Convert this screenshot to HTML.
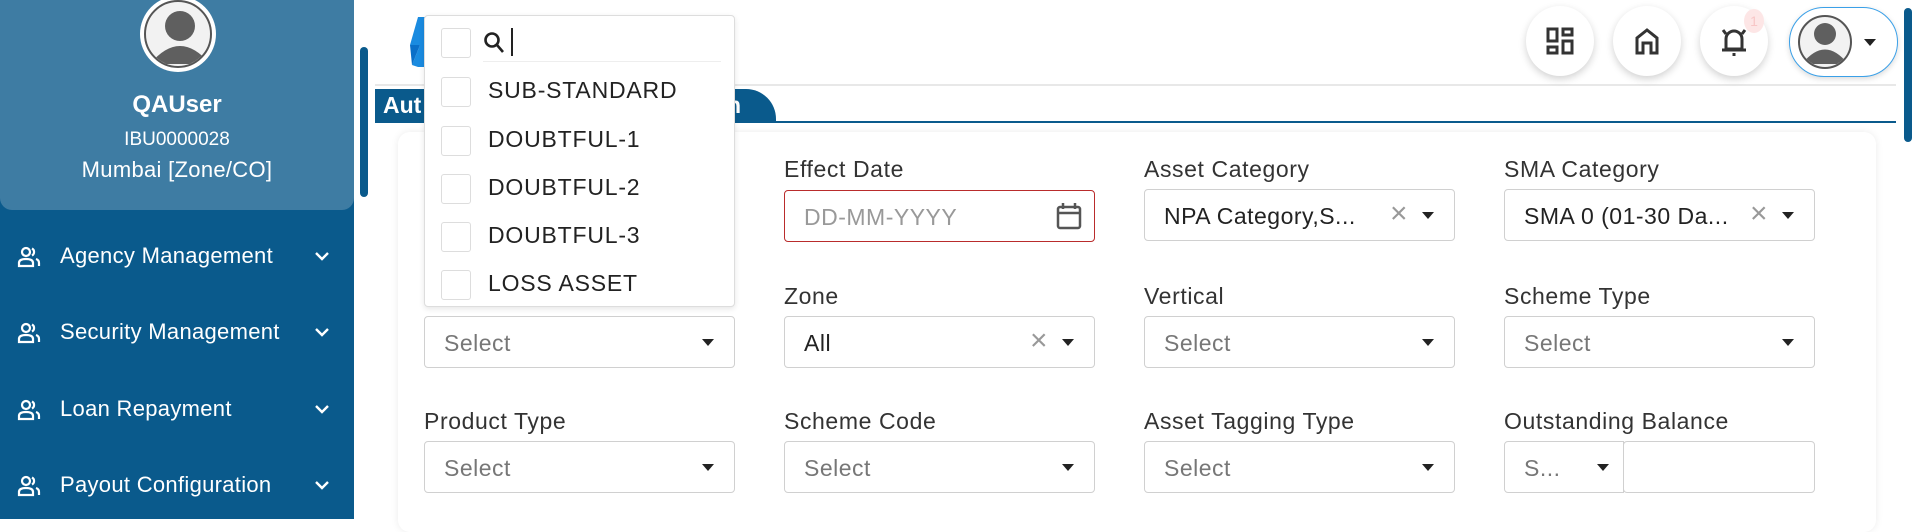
<!DOCTYPE html>
<html><head><meta charset="utf-8"><style>
*{box-sizing:border-box;margin:0;padding:0}
body{width:1920px;height:519px;overflow:hidden;background:#fff;font-family:"Liberation Sans",sans-serif;position:relative;color:#222}
.sb{position:absolute;left:0;top:0;width:354px;height:519px;background:#0a5a8c}
.card0{position:absolute;left:0;top:0;width:354px;height:210px;background:#3e7ca3;border-radius:0 0 12px 12px;color:#fff;text-align:center}
.av{position:absolute;left:140px;top:-4px;width:76px;height:76px;border-radius:50%;background:#fff;}
.av i{position:absolute;left:4px;top:4px;width:68px;height:68px;border-radius:50%;background:#f2f2f2;overflow:hidden;border:2px solid #555}
.mi{position:absolute;left:0;width:354px;color:#fff;font-size:22px;letter-spacing:.3px}
.mi .t{position:absolute;left:60px;top:-13px}
.mi svg{position:absolute}
.sc{position:absolute;background:#0a5a8c;border-radius:4px}
.lbl{position:absolute;font-size:23px;color:#333;letter-spacing:.6px}
.in{position:absolute;width:311px;height:52px;border:1px solid #d0d0d0;border-radius:4px;background:#fff;font-size:23px;letter-spacing:.5px;color:#777;padding:13px 0 0 19px}
.in .ar{position:absolute;right:20px;top:22px;width:0;height:0;border-left:6px solid transparent;border-right:6px solid transparent;border-top:7px solid #222}
.in .x{position:absolute;right:46px;top:7px;color:#999;font-size:30px;font-weight:300}
.ic{position:absolute;top:6px;width:68px;height:70px;border-radius:50%;background:#fff;box-shadow:0 3px 8px rgba(0,0,0,.18)}
.dd{position:absolute;left:424px;top:15px;width:311px;height:292px;background:#fff;border:1px solid #ddd;border-radius:4px;box-shadow:0 2px 6px rgba(0,0,0,.1)}
.cb{position:absolute;left:16px;width:30px;height:30px;border:1px solid #ddd;border-radius:3px;background:#fff}
.it{position:absolute;left:63px;font-size:23px;letter-spacing:.8px;color:#222}
</style></head><body>
<div class="sb">
 <div class="card0">
  <div class="av"><i><svg width="68" height="68" viewBox="0 0 68 68"><circle cx="34" cy="24" r="15" fill="#5f5f5f"/><path d="M4 62 Q34 26 64 62 Z" fill="#5f5f5f"/></svg></i></div>
  <div style="position:absolute;top:91px;width:100%;font-size:24px;font-weight:bold">QAUser</div>
  <div style="position:absolute;top:129px;width:100%;font-size:19px">IBU0000028</div>
  <div style="position:absolute;top:157px;width:100%;font-size:22px;letter-spacing:.3px">Mumbai [Zone/CO]</div>
 </div>
 <div class="mi" style="top:256px"><svg style="left:17px;top:-10px" width="24" height="22" viewBox="0 0 24 22" fill="none" stroke="#fff" stroke-width="2.2"><circle cx="9" cy="6" r="4"/><path d="M2 20v-3q0-4 7-4t7 4v3z"/><path d="M15 2.5a4 4 0 0 1 0 7M19 13q3 1 3 4v3"/></svg><span class="t">Agency Management</span><svg style="left:314px;top:-5px" width="16" height="10" viewBox="0 0 16 10"><path d="M2 2l6 6 6-6" stroke="#fff" stroke-width="2.4" fill="none"/></svg></div>
 <div class="mi" style="top:332px"><svg style="left:17px;top:-10px" width="24" height="22" viewBox="0 0 24 22" fill="none" stroke="#fff" stroke-width="2.2"><circle cx="9" cy="6" r="4"/><path d="M2 20v-3q0-4 7-4t7 4v3z"/><path d="M15 2.5a4 4 0 0 1 0 7M19 13q3 1 3 4v3"/></svg><span class="t">Security Management</span><svg style="left:314px;top:-5px" width="16" height="10" viewBox="0 0 16 10"><path d="M2 2l6 6 6-6" stroke="#fff" stroke-width="2.4" fill="none"/></svg></div>
 <div class="mi" style="top:409px"><svg style="left:17px;top:-10px" width="24" height="22" viewBox="0 0 24 22" fill="none" stroke="#fff" stroke-width="2.2"><circle cx="9" cy="6" r="4"/><path d="M2 20v-3q0-4 7-4t7 4v3z"/><path d="M15 2.5a4 4 0 0 1 0 7M19 13q3 1 3 4v3"/></svg><span class="t">Loan Repayment</span><svg style="left:314px;top:-5px" width="16" height="10" viewBox="0 0 16 10"><path d="M2 2l6 6 6-6" stroke="#fff" stroke-width="2.4" fill="none"/></svg></div>
 <div class="mi" style="top:485px"><svg style="left:17px;top:-10px" width="24" height="22" viewBox="0 0 24 22" fill="none" stroke="#fff" stroke-width="2.2"><circle cx="9" cy="6" r="4"/><path d="M2 20v-3q0-4 7-4t7 4v3z"/><path d="M15 2.5a4 4 0 0 1 0 7M19 13q3 1 3 4v3"/></svg><span class="t">Payout Configuration</span><svg style="left:314px;top:-5px" width="16" height="10" viewBox="0 0 16 10"><path d="M2 2l6 6 6-6" stroke="#fff" stroke-width="2.4" fill="none"/></svg></div>
</div>
<div class="sc" style="left:360px;top:47px;width:8px;height:150px"></div>
<div class="sc" style="left:1904px;top:8px;width:8px;height:134px"></div>
<svg style="position:absolute;left:408px;top:15px" width="20" height="54" viewBox="0 0 20 54"><path d="M10 2 L20 2 L20 52 L10 52 L4 50 L12 30 L2 30 Z" fill="#1a8be0"/><path d="M2 30 L12 30 L4 50Z" fill="#0a6fc8"/></svg>
<div style="position:absolute;left:375px;top:84px;width:1521px;height:2px;background:#e8e8e8"></div>
<div class="ic" style="left:1526px"><svg style="position:absolute;left:20px;top:21px" width="28" height="28" viewBox="0 0 28 28" fill="none" stroke="#333" stroke-width="3"><rect x="2" y="2" width="9" height="12"/><rect x="17" y="2" width="9" height="6"/><rect x="2" y="20" width="9" height="6"/><rect x="17" y="14" width="9" height="12"/></svg></div>
<div class="ic" style="left:1613px"><svg style="position:absolute;left:21px;top:21px" width="26" height="28" viewBox="0 0 26 28" fill="none" stroke="#333" stroke-width="3"><path d="M3 26V11L13 3l10 8v15h-6V16h-8v10z"/></svg></div>
<div class="ic" style="left:1700px"><svg style="position:absolute;left:18px;top:18px" width="32" height="34" viewBox="0 0 32 34" fill="none" stroke="#333" stroke-width="3"><path d="M8 25V15a8 8 0 0 1 16 0v10zM4 26h24M16 29v3M5 6l3 4M27 6l-3 4"/></svg><div style="position:absolute;left:44px;top:3px;width:20px;height:24px;border-radius:50%;background:#fde6e6;color:#f8c6c6;font-size:14px;text-align:center;line-height:24px">1</div></div>
<div style="position:absolute;left:1789px;top:7px;width:109px;height:70px;border-radius:35px;border:1.5px solid #3aa0e8;background:#fff;box-shadow:0 2px 6px rgba(0,0,0,.15)"><div style="position:absolute;left:8px;top:7px;width:54px;height:54px;border-radius:50%;border:2px solid #555;overflow:hidden;background:#f2f2f2"><svg width="50" height="50" viewBox="0 0 50 50"><circle cx="25" cy="17" r="11" fill="#5f5f5f"/><path d="M2 47 Q25 18 48 47Z" fill="#5f5f5f"/></svg></div><div style="position:absolute;left:74px;top:31px;border-left:6px solid transparent;border-right:6px solid transparent;border-top:7px solid #222"></div></div>
<div style="position:absolute;left:375px;top:89px;width:401px;height:34px;background:#0a5a8c;border-radius:0 30px 0 0;color:#fff;font-weight:bold;font-size:23px;padding:3px 8px">Aut<span style="position:absolute;left:352px">n</span></div>
<div style="position:absolute;left:375px;top:121px;width:1521px;height:2px;background:#0a5a8c"></div>
<div style="position:absolute;left:398px;top:132px;width:1478px;height:400px;background:#fff;border-radius:12px;box-shadow:0 0 8px rgba(0,0,0,.08)"></div>
<div class="lbl" style="left:784px;top:156px">Effect Date</div>
<div class="lbl" style="left:1144px;top:156px">Asset Category</div>
<div class="lbl" style="left:1504px;top:156px">SMA Category</div>
<div class="in" style="left:784px;top:190px;border-color:#b92c2c;color:#999">DD-MM-YYYY<svg style="position:absolute;right:12px;top:11px" width="26" height="28" viewBox="0 0 26 28" fill="none" stroke="#555" stroke-width="2.5"><rect x="2" y="5" width="22" height="21" rx="2"/><path d="M2 11h22M7 1v6M19 1v6"/></svg></div>
<div class="in" style="left:1144px;top:189px;color:#222">NPA Category,S...<span class="x">×</span><span class="ar"></span></div>
<div class="in" style="left:1504px;top:189px;color:#222">SMA 0 (01-30 Da...<span class="x">×</span><span class="ar"></span></div>
<div class="lbl" style="left:784px;top:283px">Zone</div>
<div class="lbl" style="left:1144px;top:283px">Vertical</div>
<div class="lbl" style="left:1504px;top:283px">Scheme Type</div>
<div class="in" style="left:424px;top:316px">Select<span class="ar"></span></div>
<div class="in" style="left:784px;top:316px;color:#222">All<span class="x">×</span><span class="ar"></span></div>
<div class="in" style="left:1144px;top:316px">Select<span class="ar"></span></div>
<div class="in" style="left:1504px;top:316px">Select<span class="ar"></span></div>
<div class="lbl" style="left:424px;top:408px">Product Type</div>
<div class="lbl" style="left:784px;top:408px">Scheme Code</div>
<div class="lbl" style="left:1144px;top:408px">Asset Tagging Type</div>
<div class="lbl" style="left:1504px;top:408px">Outstanding Balance</div>
<div class="in" style="left:424px;top:441px">Select<span class="ar"></span></div>
<div class="in" style="left:784px;top:441px">Select<span class="ar"></span></div>
<div class="in" style="left:1144px;top:441px">Select<span class="ar"></span></div>
<div class="in" style="left:1504px;top:441px;width:120px;border-radius:4px 0 0 4px">S...<span class="ar" style="right:14px"></span></div>
<div class="in" style="left:1623px;top:441px;width:192px"></div>
<div class="dd">
 <div class="cb" style="top:12px"></div>
 <svg style="position:absolute;left:58px;top:14px" width="24" height="26" viewBox="0 0 24 26" fill="none" stroke="#222" stroke-width="2.6"><circle cx="9" cy="10" r="6.5"/><path d="M14 15l6 7"/></svg>
 <div style="position:absolute;left:86px;top:12px;width:2px;height:28px;background:#222"></div>
 <div style="position:absolute;left:58px;top:45px;width:238px;height:1px;background:#eee"></div>
 <div class="cb" style="top:61px"></div><div class="it" style="top:61px">SUB-STANDARD</div>
 <div class="cb" style="top:110px"></div><div class="it" style="top:110px">DOUBTFUL-1</div>
 <div class="cb" style="top:158px"></div><div class="it" style="top:158px">DOUBTFUL-2</div>
 <div class="cb" style="top:206px"></div><div class="it" style="top:206px">DOUBTFUL-3</div>
 <div class="cb" style="top:254px"></div><div class="it" style="top:254px">LOSS ASSET</div>
</div>
</body></html>
